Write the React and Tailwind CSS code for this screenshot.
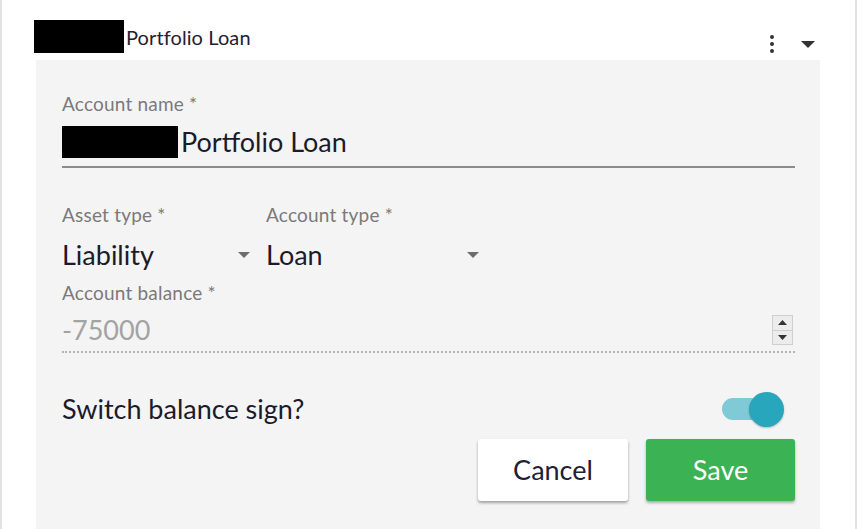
import React, { useState } from "react";

const Caret = ({ className = "" }) => (
  <svg width="12" height="6" viewBox="0 0 12 6" className={className}>
    <path d="M0 0 L12 0 L6 6 Z" fill="currentColor" />
  </svg>
);

const SelectField = ({ label, value, width }) => (
  <div className={`flex flex-col ${width}`}>
    <span className="text-[19px] leading-[20px] tracking-[0.2px] text-[#7a7a7a]">{label}</span>
    <div className="mt-[14px] flex items-center justify-between pr-[1px]">
      <span className="text-[27px] leading-[32px] text-[#1b1b2b]">{value}</span>
      <Caret className="text-[#6d6d6d] mr-[-2px]" />
    </div>
  </div>
);

const App = () => {
  const [flip, setFlip] = useState(true);

  return (
    <div className="w-[866px] h-[529px] bg-white overflow-hidden font-['Lato','Noto_Sans',sans-serif]">
      <div className="w-[857px] h-full border-x-2 border-[#e2e2e2]">
        {/* card header */}
        <div className="h-[60px] pt-[20px] pl-[32px] pr-[40px] flex items-start">
          <div className="w-[90px] h-[33px] bg-black" />
          <span className="ml-[2px] mt-[6px] text-[20px] leading-[22px] tracking-[0.1px] text-[#1f2033]">
            Portfolio Loan
          </span>
          <div className="ml-auto mt-[15px] flex items-center gap-[27px]">
            <div className="flex flex-col gap-[3px]">
              <span className="w-[4px] h-[4px] rounded-full bg-[#333]" />
              <span className="w-[4px] h-[4px] rounded-full bg-[#333]" />
              <span className="w-[4px] h-[4px] rounded-full bg-[#333]" />
            </div>
            <svg width="14" height="7" viewBox="0 0 14 7">
              <path d="M0 0 L14 0 L7 7 Z" fill="#333" />
            </svg>
          </div>
        </div>

        {/* edit panel */}
        <div className="ml-[34px] w-[784px] h-[470px] bg-[#f4f4f4] pt-[34px] pl-[26px] pr-[25px]">
          <div className="flex flex-col">
            <span className="text-[19px] leading-[20px] tracking-[0.2px] text-[#7a7a7a]">Account name *</span>
            <div className="mt-[12px] pb-[8px] border-b-2 border-[#8c8c8c] flex items-center">
              <div className="w-[116px] h-[32px] bg-black" />
              <span className="ml-[3px] text-[27px] leading-[32px] text-[#1b1b2b]">Portfolio Loan</span>
            </div>
          </div>

          <div className="mt-[37px] flex">
            <SelectField label="Asset type *" value="Liability" width="w-[187px]" />
            <div className="w-[17px]" />
            <SelectField label="Account type *" value="Loan" width="w-[212px]" />
          </div>

          <div className="mt-[12px] flex flex-col">
            <span className="text-[19px] leading-[20px] tracking-[0.2px] text-[#7a7a7a]">Account balance *</span>
            <div className="mt-[11px] pb-[5px] border-b-2 border-dotted border-[#b4b4b4] flex items-center">
              <span className="text-[27px] leading-[32px] text-[#a3a3a3]">-75000</span>
              <div className="ml-auto mr-[2px] w-[21px] h-[30px] flex flex-col border border-[#cfcfcf] bg-[#ececec]">
                <div className="flex-1 flex items-center justify-center border-b border-[#cfcfcf]">
                  <svg width="9" height="5" viewBox="0 0 9 5">
                    <path d="M0 5 L9 5 L4.5 0 Z" fill="#333" />
                  </svg>
                </div>
                <div className="flex-1 flex items-center justify-center">
                  <svg width="9" height="5" viewBox="0 0 9 5">
                    <path d="M0 0 L9 0 L4.5 5 Z" fill="#333" />
                  </svg>
                </div>
              </div>
            </div>
          </div>

          <div className="mt-[38px] flex items-center">
            <span className="text-[27px] leading-[30px] text-[#1b1b2b]">Switch balance sign?</span>
            <button
              onClick={() => setFlip(!flip)}
              className="ml-auto mr-[12px] relative w-[60px] h-[36px] flex items-center"
            >
              <span className="absolute left-[-1px] w-[40px] h-[22px] rounded-full bg-[#7fcad6]" />
              <span
                className={`absolute w-[35px] h-[35px] rounded-full bg-[#28a6bb] shadow-[0_1px_2px_rgba(0,0,0,0.25)] ${
                  flip ? "left-[26px]" : "left-[-6px]"
                }`}
              />
            </button>
          </div>

          <div className="mt-[12px] flex justify-end gap-[18px]">
            <button className="w-[150px] h-[62px] bg-white rounded-[3px] shadow-[0_2px_3px_rgba(0,0,0,0.35)] text-[27px] text-[#1f2033]">
              Cancel
            </button>
            <button className="w-[149px] h-[62px] bg-[#3bb354] rounded-[3px] shadow-[0_2px_3px_rgba(0,0,0,0.3)] text-[27px] text-white">
              Save
            </button>
          </div>
        </div>
      </div>
    </div>
  );
};

export default App;
